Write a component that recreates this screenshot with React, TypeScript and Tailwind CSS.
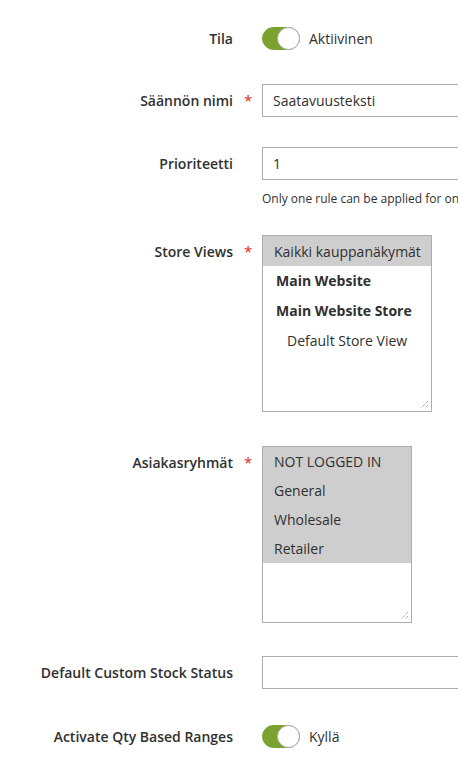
import React from "react"

function Toggle({ label }: { label: string }) {
  return (
    <div className="flex items-center h-[33px]">
      <div className="flex items-center justify-end w-[38px] h-[23px] rounded-full bg-[#79a22e] border border-[#79a22e]">
        <div className="w-[23px] h-[23px] rounded-full bg-white border border-[#adadad] -mr-px" />
      </div>
      <span className="ml-[9px] text-[14px] text-[#303030]">{label}</span>
    </div>
  )
}

function Grip() {
  return (
    <svg className="absolute right-[2px] bottom-[2px]" width="9" height="9" viewBox="0 0 9 9">
      <path d="M8 1 L1 8 M8 5 L5 8" stroke="#8a8a8a" strokeWidth="1" strokeDasharray="1 1" />
    </svg>
  )
}

function Row({ label, required, children, className }: { label: string; required?: boolean; children: React.ReactNode; className?: string }) {
  return (
    <div className={"flex items-start " + (className || "")}>
      <div className="w-[233px] shrink-0 text-right font-semibold text-[14px] leading-[33px] text-[#303030] whitespace-nowrap">{label}</div>
      <div className="w-[29px] shrink-0 pl-[11px] leading-[33px] text-[#e22626] text-[15px]">{required ? "*" : ""}</div>
      <div className="flex-1 min-w-0">{children}</div>
    </div>
  )
}

export default function App() {
  return (
    <div className="w-[458px] h-[761px] overflow-hidden bg-white text-[#303030]" style={{ fontFamily: '"Open Sans", sans-serif' }}>
      <div className="pt-[22px] w-[600px]">
        <Row label="Tila">
          <Toggle label="Aktiivinen" />
        </Row>

        <Row label="Säännön nimi" required className="mt-[29px]">
          <div className="w-[300px] h-[33px] border border-[#adadad] px-[10px] leading-[31px] text-[14px]">Saatavuusteksti</div>
        </Row>

        <Row label="Prioriteetti" className="mt-[30px]">
          <div className="w-[300px] h-[33px] border border-[#adadad] px-[10px] leading-[31px] text-[14px]">1</div>
          <div className="mt-[10px] text-[12px] whitespace-nowrap">Only one rule can be applied for one product at a time</div>
        </Row>

        <Row label="Store Views" required className="mt-[27px]">
          <div className="relative w-[170px] h-[177px] border border-[#adadad] text-[14px]">
            <div className="bg-[#cecece] h-[30px] leading-[31px] pl-[11px] whitespace-nowrap">Kaikki kauppanäkymät</div>
            <div className="h-[30px] leading-[30px] pl-[13px] font-bold whitespace-nowrap">Main Website</div>
            <div className="h-[30px] leading-[30px] pl-[13px] font-bold whitespace-nowrap">Main Website Store</div>
            <div className="h-[30px] leading-[30px] pl-[24px] whitespace-nowrap">Default Store View</div>
            <Grip />
          </div>
        </Row>

        <Row label="Asiakasryhmät" required className="mt-[34px]">
          <div className="relative w-[150px] h-[177px] border border-[#adadad] text-[14px]">
            <div className="bg-[#cecece]">
              <div className="h-[29px] leading-[29px] pl-[11px]">NOT LOGGED IN</div>
              <div className="h-[29px] leading-[29px] pl-[11px]">General</div>
              <div className="h-[29px] leading-[29px] pl-[11px]">Wholesale</div>
              <div className="h-[29px] leading-[29px] pl-[11px]">Retailer</div>
            </div>
            <Grip />
          </div>
        </Row>

        <Row label="Default Custom Stock Status" className="mt-[33px]">
          <div className="w-[300px] h-[33px] border border-[#adadad]" />
        </Row>

        <Row label="Activate Qty Based Ranges" className="mt-[31px]">
          <Toggle label="Kyllä" />
        </Row>
      </div>
    </div>
  )
}
